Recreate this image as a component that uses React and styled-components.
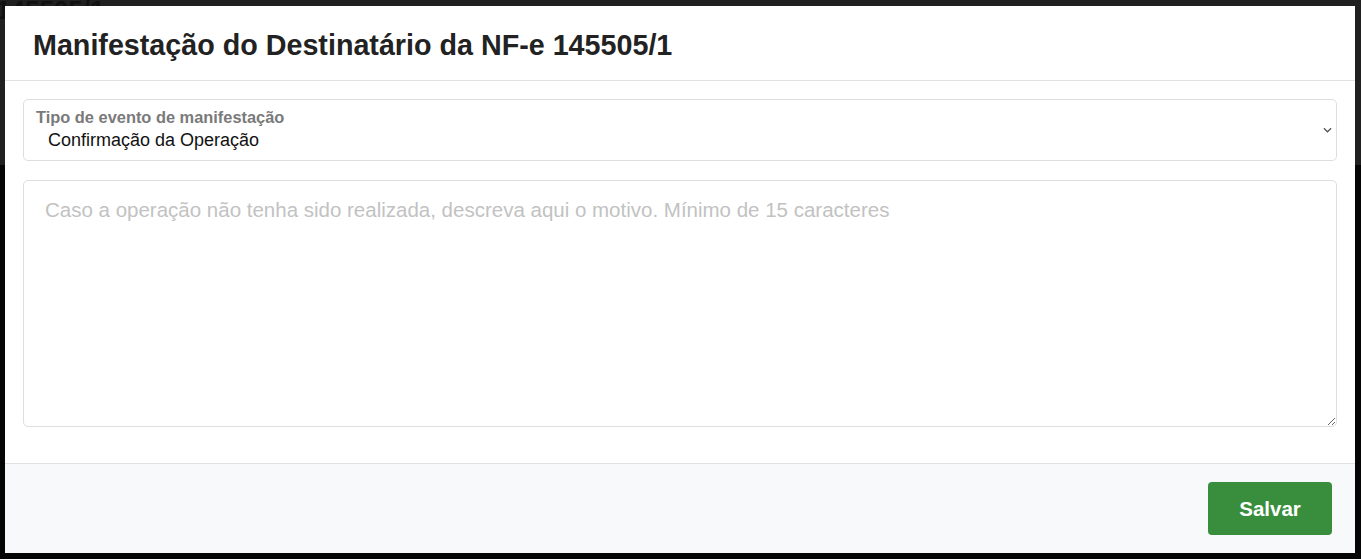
import styled, { createGlobalStyle } from 'styled-components';

const FONT = `"Liberation Sans", Arial, sans-serif`;
const BORDER = `#dedede`;
const GREEN = `#388e3c`;

const GlobalStyle = createGlobalStyle`
  html, body {
    margin: 0;
    padding: 0;
    background: #050505;
    font-family: ${FONT};
  }
  * { box-sizing: border-box; }
`;

export default function App() {
  return (
    <>
      <GlobalStyle />
      <Page>
        <PageTop>
          <PageTitle>145505/1</PageTitle>
        </PageTop>
      </Page>
      <Overlay>
        <Modal>
          <Header>
            <Title>Manifestação do Destinatário da NF-e 145505/1</Title>
          </Header>
          <Body>
            <Field>
              <Label htmlFor="tipo">Tipo de evento de manifestação</Label>
              <Select id="tipo" defaultValue="confirmacao">
                <option value="confirmacao">Confirmação da Operação</option>
                <option value="ciencia">Ciência da Operação</option>
                <option value="desconhecimento">Desconhecimento da Operação</option>
                <option value="nao-realizada">Operação não Realizada</option>
              </Select>
              <Chevron viewBox="0 0 10 6" aria-hidden="true">
                <path d="M1 1l4 4 4-4" fill="none" stroke="#555" strokeWidth="1.4" />
              </Chevron>
            </Field>
            <TextArea placeholder="Caso a operação não tenha sido realizada, descreva aqui o motivo. Mínimo de 15 caracteres" />
          </Body>
          <Footer>
            <SaveButton type="button">Salvar</SaveButton>
          </Footer>
        </Modal>
      </Overlay>
    </>
  );
}

const Page = styled.div`
  height: 559px;
  background: #050505;
  overflow: hidden;
`;

const PageTop = styled.div`
  height: 165px;
  background: #202020;
`;

const PageTitle = styled.div`
  font-size: 26px;
  font-weight: 700;
  color: #111;
  line-height: 20px;
  margin-left: -4px;
`;

const Overlay = styled.div`
  position: fixed;
  inset: 0;
  display: flex;
  padding: 6px 6px 6px 5px;
`;

const Modal = styled.div`
  flex: 1;
  display: flex;
  flex-direction: column;
  background: #fff;
`;

const Header = styled.div`
  height: 75px;
  display: flex;
  align-items: center;
  padding: 4px 28px 0;
  border-bottom: 1px solid #dfe1e4;
`;

const Title = styled.h1`
  margin: 0;
  font-size: 28.7px;
  font-weight: 700;
  color: #222;
`;

const Body = styled.div`
  display: flex;
  flex-direction: column;
  gap: 19px;
  padding: 18px 18px 36px;
`;

const Field = styled.div`
  position: relative;
  height: 62px;
  border: 1px solid ${BORDER};
  border-radius: 5px;
`;

const Label = styled.label`
  position: absolute;
  left: 12px;
  top: 8px;
  font-size: 16.4px;
  font-weight: 700;
  color: #7a7a7a;
`;

const Select = styled.select`
  appearance: none;
  width: 100%;
  height: 100%;
  border: none;
  outline: none;
  background: transparent;
  padding: 20px 30px 0 24px;
  font-family: ${FONT};
  font-size: 18px;
  color: #111;
`;

const Chevron = styled.svg`
  position: absolute;
  right: 4px;
  top: 27px;
  width: 9px;
  height: 6px;
  pointer-events: none;
`;

const TextArea = styled.textarea`
  height: 247px;
  border: 1px solid ${BORDER};
  border-radius: 5px;
  padding: 17px 21px;
  font-family: ${FONT};
  font-size: 20.5px;
  color: #222;
  outline: none;
  resize: vertical;

  &::placeholder {
    color: #c2c2c2;
  }
`;

const Footer = styled.div`
  flex: 1;
  display: flex;
  justify-content: flex-end;
  align-items: flex-start;
  padding: 18px 23px;
  background: #f8f9fa;
  border-top: 1px solid #dfe1e4;
`;

const SaveButton = styled.button`
  width: 124px;
  height: 53px;
  border: none;
  border-radius: 4px;
  background: ${GREEN};
  color: #fff;
  font-family: ${FONT};
  font-size: 20.5px;
  font-weight: 700;
  cursor: pointer;
`;
